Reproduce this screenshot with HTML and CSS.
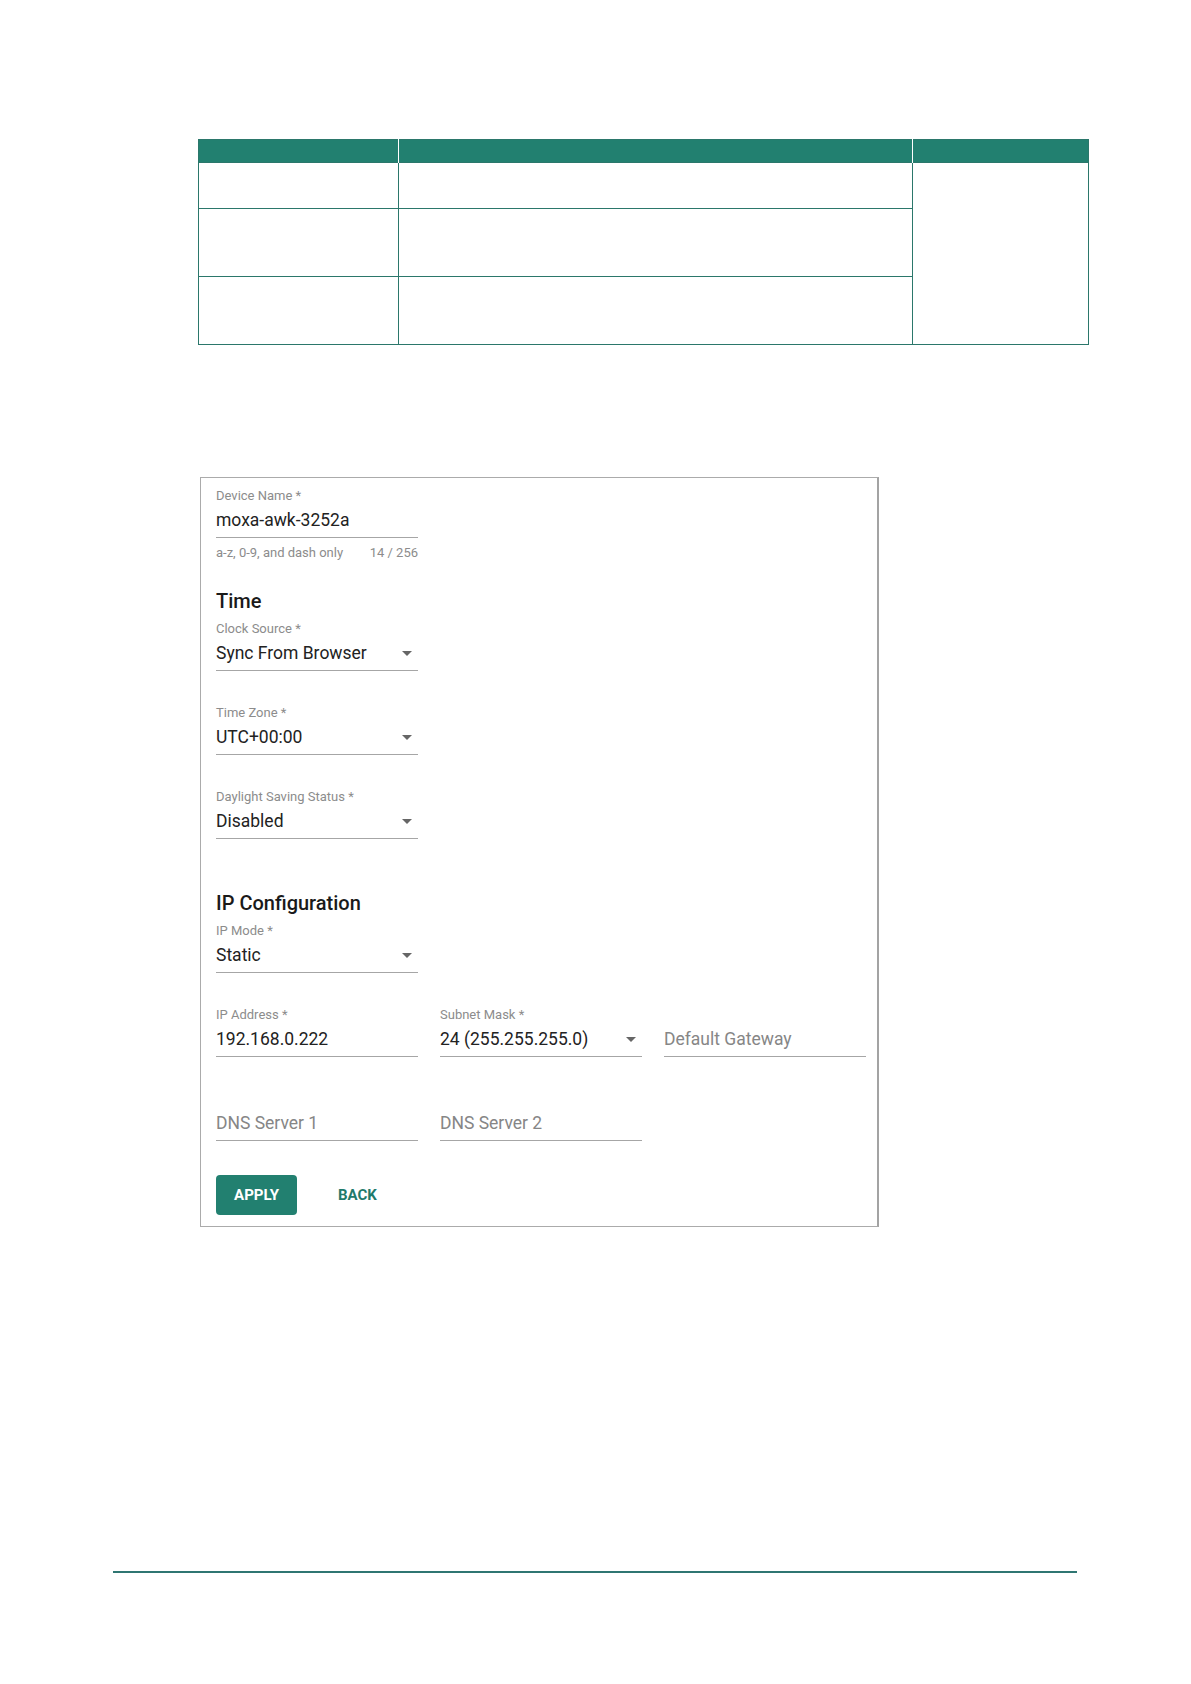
FILE: index.html
```html
<!DOCTYPE html>
<html lang="en">
<head>
    <meta charset="UTF-8">
    <meta name="viewport" content="width=device-width, initial-scale=1.0">
    <title>General Settings</title>
    <link rel="stylesheet" href="styles.css">
</head>
<body>
    <div class="page">

        <!-- Parameter table -->
        <table class="spec">
            <colgroup>
                <col class="col-name">
                <col class="col-desc">
                <col class="col-default">
            </colgroup>
            <tr class="row-head"><th></th><th></th><th></th></tr>
            <tr class="row-1"><td></td><td></td><td rowspan="3"></td></tr>
            <tr class="row-2"><td></td><td></td></tr>
            <tr class="row-3"><td></td><td></td></tr>
        </table>

        <!-- Settings form -->
        <div class="panel">
            <div class="field">
                <div class="field-label">Device Name *</div>
                <div class="field-input">moxa-awk-3252a</div>
                <div class="field-hint">
                    <span>a-z, 0-9, and dash only</span>
                    <span>14 / 256</span>
                </div>
            </div>

            <h2 class="section-title first">Time</h2>
            <div class="field spaced">
                <div class="field-label">Clock Source *</div>
                <div class="field-input">Sync From Browser <span class="arrow"></span></div>
            </div>
            <div class="field spaced">
                <div class="field-label">Time Zone *</div>
                <div class="field-input">UTC+00:00 <span class="arrow"></span></div>
            </div>
            <div class="field spaced">
                <div class="field-label">Daylight Saving Status *</div>
                <div class="field-input">Disabled <span class="arrow"></span></div>
            </div>

            <h2 class="section-title">IP Configuration</h2>
            <div class="field spaced">
                <div class="field-label">IP Mode *</div>
                <div class="field-input">Static <span class="arrow"></span></div>
            </div>
            <div class="field-row">
                <div class="field spaced">
                    <div class="field-label">IP Address *</div>
                    <div class="field-input">192.168.0.222</div>
                </div>
                <div class="field spaced">
                    <div class="field-label">Subnet Mask *</div>
                    <div class="field-input">24 (255.255.255.0) <span class="arrow"></span></div>
                </div>
                <div class="field spaced">
                    <div class="field-label"></div>
                    <div class="field-input placeholder">Default Gateway</div>
                </div>
            </div>
            <div class="field-row">
                <div class="field spaced">
                    <div class="field-label"></div>
                    <div class="field-input placeholder">DNS Server 1</div>
                </div>
                <div class="field spaced">
                    <div class="field-label"></div>
                    <div class="field-input placeholder">DNS Server 2</div>
                </div>
            </div>

            <div class="actions">
                <button class="btn-apply">APPLY</button>
                <button class="btn-back">BACK</button>
            </div>
        </div>

        <div class="footer-line"></div>
    </div>
</body>
</html>
```

FILE: styles.css
```css
body {
    margin: 0;
    font-family: Roboto, "Liberation Sans", sans-serif;
    background-color: #FFFFFF;
    color: #212121;
}
.page {
    padding-top: 139px;
}

/* table */
.spec {
    margin-left: 198px;
    width: 890px;
    table-layout: fixed;
    border-collapse: collapse;
    border: 1px solid #2b776b;
}
.col-name { width: 200px; }
.col-desc { width: 514px; }
.col-default { width: 176px; }
.spec th {
    background-color: #228070;
    border: none;
    border-right: 1px solid #FFFFFF;
    padding: 0;
}
.spec th:last-child {
    border-right: none;
}
.spec td {
    border: 1px solid #2b776b;
    padding: 0;
}
.row-head { height: 23px; }
.row-1 { height: 46px; }
.row-2 { height: 68px; }
.row-3 { height: 68px; }

/* form panel */
.panel {
    margin: 132px 0 0 200px;
    width: 679px;
    box-sizing: border-box;
    border: 1px solid #ababab;
    border-right: 2px solid #a3a3a3;
    padding: 10px 11px 11px 15px;
}
.field {
    width: 202px;
}
.field.spaced {
    padding-bottom: 34px;
}
.field-row {
    display: flex;
    gap: 22px;
}
.field-label {
    height: 16px;
    font-size: 13px;
    line-height: 16px;
    color: #8c8c8c;
}
.field-input {
    display: flex;
    justify-content: space-between;
    align-items: center;
    margin-top: 4px;
    height: 24px;
    padding-bottom: 5px;
    border-bottom: 1px solid #a6a6a6;
    font-size: 17.5px;
    line-height: 24px;
    color: #222222;
    white-space: nowrap;
}
.field-input.placeholder {
    color: #868686;
}
.arrow {
    width: 0;
    height: 0;
    border-left: 5px solid transparent;
    border-right: 5px solid transparent;
    border-top: 5px solid #666666;
    margin-right: 6px;
}
.field-hint {
    display: flex;
    justify-content: space-between;
    margin-top: 7px;
    font-size: 13px;
    line-height: 16px;
    color: #8c8c8c;
}
.section-title {
    margin: 16px 0 6px 0;
    font-size: 20px;
    font-weight: 500;
    line-height: 28px;
    color: #1a1a1a;
}
.section-title.first {
    margin-top: 26px;
}

/* buttons */
.actions {
    display: flex;
    align-items: center;
}
.btn-apply {
    width: 81px;
    height: 40px;
    background-color: #228070;
    color: #FFFFFF;
    border: none;
    border-radius: 4px;
    font-family: Roboto, "Liberation Sans", sans-serif;
    font-size: 15px;
    font-weight: 700;
    padding: 0;
}
.btn-back {
    margin-left: 25px;
    height: 40px;
    padding: 0 16px;
    background: none;
    border: none;
    color: #1f7a6b;
    font-family: Roboto, "Liberation Sans", sans-serif;
    font-size: 15px;
    font-weight: 700;
}

.footer-line {
    margin: 344px 0 0 113px;
    width: 964px;
    height: 2px;
    background-color: #2f7672;
}
```
